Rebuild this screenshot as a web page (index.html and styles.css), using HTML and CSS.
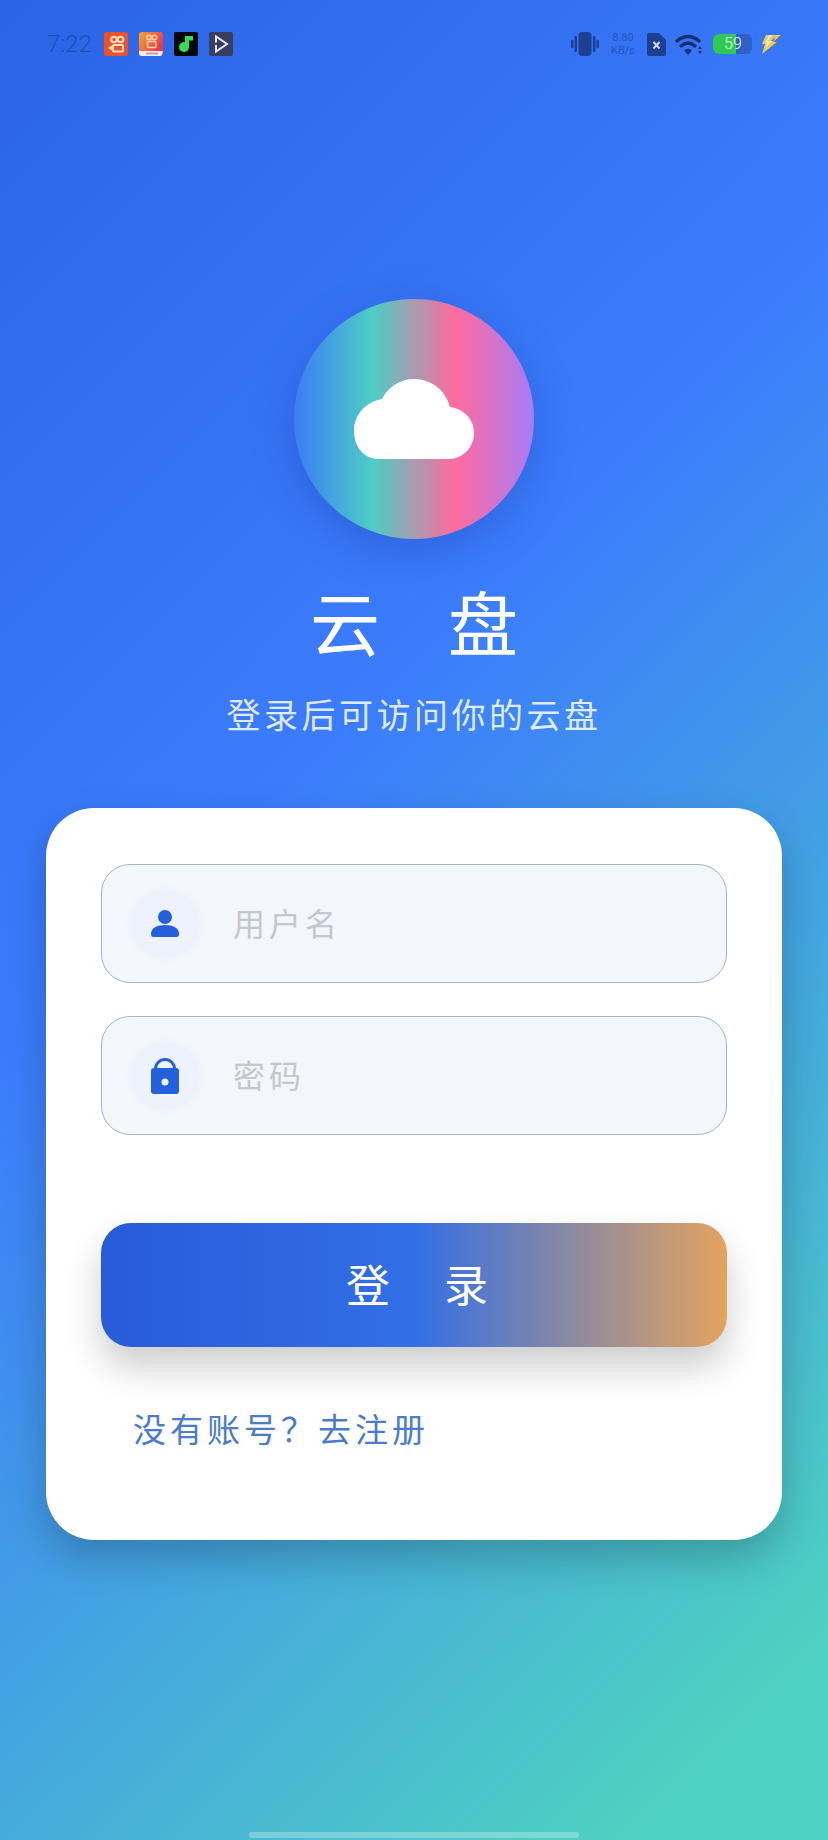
FILE: index.html
```html
<!DOCTYPE html>
<html lang="zh-CN">
<head>
    <meta charset="UTF-8">
    <meta name="viewport" content="width=device-width, initial-scale=1.0">
    <title>云盘</title>
    <link rel="stylesheet" href="styles.css">
</head>
<body>
    <div class="page">
        <!-- Status bar -->
        <div class="status-bar">
            <div class="status-left">
                <span class="time">7:22</span>
                <svg class="app-icon" viewBox="0 0 24 24">
                    <rect width="24" height="24" rx="3" fill="#ee5128"/>
                    <g fill="none" stroke="#fbe3c8" stroke-width="2">
                        <circle cx="10" cy="7.500" r="2.800"/>
                        <circle cx="16.500" cy="7.500" r="2.800"/>
                        <rect x="9" y="13" width="10" height="6.500" rx="1.500"/>
                    </g>
                    <path d="M8 13.500v5l-4-2.500z" fill="#fbe3c8"/>
                </svg>
                <svg class="app-icon" viewBox="0 0 24 24">
                    <defs>
                        <linearGradient id="kwaiGrad" x1="0" y1="0" x2="1" y2="0.6">
                            <stop offset="0" stop-color="#f7a72e"/>
                            <stop offset="1" stop-color="#ee2f4e"/>
                        </linearGradient>
                    </defs>
                    <rect width="24" height="24" rx="3" fill="url(#kwaiGrad)"/>
                    <g fill="none" stroke="#fbd9b0" stroke-width="1.500">
                        <circle cx="10" cy="5.500" r="2.200"/>
                        <circle cx="15.500" cy="5.500" r="2.200"/>
                        <rect x="8.500" y="9.500" width="8.500" height="6" rx="1.200"/>
                    </g>
                    <path d="M0 19h24l-1 3.500q-.5 1.500-2 1.500H3q-3 0-3-3z" fill="#f4ecea"/>
                    <rect x="7" y="20.500" width="12" height="2" fill="#b9a4b5"/>
                </svg>
                <svg class="app-icon" viewBox="0 0 24 24">
                    <rect width="24" height="24" rx="2" fill="#05070c"/>
                    <path d="M11 4h8v4.500h-4V15a5 5 0 1 1-4-4.800z" fill="#35dc5c"/>
                </svg>
                <svg class="app-icon" viewBox="0 0 24 24">
                    <rect width="24" height="24" rx="2" fill="#363f5f"/>
                    <path d="M7 4.500v15l11-7.500z" fill="none" stroke="#e8e2ee" stroke-width="2"/>
                    <path d="M6 12l6-1" stroke="#363f5f" stroke-width="2.500"/>
                </svg>
            </div>
            <div class="status-right">
                <svg class="vibrate" viewBox="0 0 28 24">
                    <rect x="7.500" y="0" width="13" height="24" rx="4" fill="#1d3f8e"/>
                    <rect x="3.500" y="4" width="2.500" height="16" rx="1" fill="#1d3f8e"/>
                    <rect x="22" y="4" width="2.500" height="16" rx="1" fill="#1d3f8e"/>
                    <rect x="0" y="8" width="2.500" height="8" rx="1" fill="#1d3f8e"/>
                    <rect x="25.500" y="8" width="2.500" height="8" rx="1" fill="#1d3f8e"/>
                </svg>
                <div class="speed">
                    <span>8.80</span>
                    <span>KB/s</span>
                </div>
                <svg class="sim" viewBox="0 0 19 23">
                    <path d="M2 0h10l7 7v14a2 2 0 0 1-2 2H2a2 2 0 0 1-2-2V2a2 2 0 0 1 2-2z" fill="#1d3f8e"/>
                    <path d="M6.500 9l6 6.500M12.500 9l-6 6.500" stroke="#c9d6f2" stroke-width="2"/>
                </svg>
                <svg class="wifi" viewBox="0 0 28 21">
                    <g fill="none" stroke="#14306f" stroke-width="3.400" stroke-linecap="round">
                        <path d="M2 7q11-9 22 0"/>
                        <path d="M6 12q7-6 14 0"/>
                    </g>
                    <path d="M9 16.500q4-3.500 8 0l-4 4.500z" fill="#14306f"/>
                    <path d="M25 12l2 3h-4zM25 20l-2-3h4z" fill="#14306f"/>
                </svg>
                <div class="battery">
                    <div class="battery-fill"></div>
                    <span class="battery-num">59</span>
                </div>
                <svg class="bolt" viewBox="0 0 21 20">
                    <path d="M6 1h15l-8 7h4L2 20l3-10H2z" fill="#f2c83c"/>
                    <path d="M9 1h4L8 7h4l-7 8 2-6H5z" fill="#dfe5ee"/>
                    <path d="M15 3l-4 4h3z" fill="#6d7fa8"/>
                </svg>
            </div>
        </div>

        <!-- Logo and title -->
        <div class="hero">
            <div class="logo">
                <svg class="cloud" viewBox="0 0 120 80">
                    <path d="M25 80C10 80 0 68 0 52C0 35 12 23 28 20C34 8 46 0 60 0C78 0 92 12 96 28C110 30 120 40 120 54C120 69 108 80 95 80Z" fill="#fff"/>
                </svg>
            </div>
            <h1 class="title">云盘</h1>
            <p class="subtitle">登录后可访问你的云盘</p>
        </div>

        <!-- Login card -->
        <div class="card">
            <div class="field">
                <div class="field-icon">
                    <svg viewBox="0 0 28 27" width="28" height="27">
                        <circle cx="14" cy="7" r="7" fill="#2360dc"/>
                        <path d="M0 24C0 18 6 15 14 15S28 18 28 24q0 3-2.500 3H2.500Q0 27 0 24z" fill="#2360dc"/>
                    </svg>
                </div>
                <span class="placeholder">用户名</span>
            </div>
            <div class="field">
                <div class="field-icon">
                    <svg viewBox="0 0 28 36" width="28" height="36">
                        <path d="M4.500 13V11a9.500 9.500 0 0 1 19 0V13" fill="none" stroke="#2360dc" stroke-width="3"/>
                        <rect x="0" y="10" width="28" height="26" rx="3" fill="#2360dc"/>
                        <circle cx="14" cy="24" r="3.500" fill="#eef2fb"/>
                    </svg>
                </div>
                <span class="placeholder">密码</span>
            </div>
            <button class="login-btn"><span class="login-text">登录</span></button>
            <a class="register-link">没有账号？去注册</a>
        </div>

        <div class="home-bar"></div>
    </div>
</body>
</html>
```

FILE: styles.css
```css
body {
    margin: 0;
    font-family: "Noto Sans CJK SC", "Noto Sans", sans-serif;
}

.page {
    display: flex;
    flex-direction: column;
    width: 828px;
    height: 1840px;
    overflow: hidden;
    background: linear-gradient(135deg, #2b64e6 0%, #3b7cfd 40%, #4ed2c0 93%);
}

.status-bar {
    display: flex;
    justify-content: space-between;
    align-items: center;
    height: 24px;
    padding: 32px 47px 0 47px;
}

.status-left,
.status-right {
    display: flex;
    align-items: center;
}

.time {
    font-family: Roboto, sans-serif;
    font-size: 24px;
    font-weight: 300;
    color: #1f4fb4;
    margin-right: 12px;
}

.app-icon {
    width: 24px;
    height: 24px;
    margin-right: 11px;
}

.vibrate {
    width: 28px;
    height: 24px;
}

.speed {
    display: flex;
    flex-direction: column;
    align-items: center;
    width: 26px;
    margin-left: 11px;
    font-family: Roboto, sans-serif;
    font-size: 11px;
    line-height: 13px;
    color: #2556bd;
}

.sim {
    width: 19px;
    height: 23px;
    margin-left: 11px;
}

.wifi {
    width: 28px;
    height: 21px;
    margin-left: 9px;
}

.battery {
    position: relative;
    width: 39px;
    height: 20px;
    margin-left: 10px;
    border-radius: 6px;
    background: #2f5fc9;
    overflow: hidden;
}

.battery-fill {
    width: 23px;
    height: 20px;
    background: #2ecb52;
}

.battery-num {
    position: absolute;
    left: 11px;
    top: 0;
    font-family: Roboto, sans-serif;
    font-size: 16px;
    font-weight: 300;
    line-height: 20px;
    color: #f2f7ee;
}

.bolt {
    width: 21px;
    height: 20px;
    margin-left: 8px;
}

.hero {
    display: flex;
    flex-direction: column;
    align-items: center;
    padding-top: 243px;
    color: #fff;
}

.logo {
    display: flex;
    justify-content: center;
    align-items: center;
    width: 240px;
    height: 240px;
    border-radius: 50%;
    background: linear-gradient(90deg, #3b7cf6 0%, #4ecdc4 33%, #ff6b9d 67%, #a67cf8 100%);
    box-shadow: 0 12px 40px rgba(30, 60, 160, 0.35);
}

.cloud {
    width: 120px;
    height: 80px;
}

.title {
    margin: 36px 0 0 0;
    font-size: 70px;
    line-height: 92px;
    font-weight: 400;
    letter-spacing: 68px;
    padding-left: 68px;
}

.subtitle {
    margin: 24px 0 0 0;
    font-size: 34px;
    line-height: 46px;
    letter-spacing: 3.500px;
    color: rgba(255, 255, 255, 0.85);
}

.card {
    display: flex;
    flex-direction: column;
    margin: 71px 46px 0 46px;
    padding: 56px 55px 0 55px;
    height: 676px;
    border-radius: 48px;
    background: #fff;
    box-shadow: 0 18px 40px rgba(0, 0, 0, 0.22);
}

.field {
    display: flex;
    align-items: center;
    box-sizing: border-box;
    height: 119px;
    margin-bottom: 33px;
    padding-left: 28px;
    border: 1px solid #a5b5ca;
    border-radius: 29px;
    background: #f3f6fb;
}

.field-icon {
    display: flex;
    justify-content: center;
    align-items: center;
    width: 70px;
    height: 70px;
    border-radius: 50%;
    background: #eef2fc;
    box-shadow: 0 0 6px #eef2fc;
}

.placeholder {
    margin: 0 0 4px 33px;
    font-size: 32px;
    font-weight: 400;
    letter-spacing: 4px;
    color: #c3c7cf;
}

.login-btn {
    height: 124px;
    margin-top: 55px;
    padding: 0 0 5px 60px;
    border: none;
    border-radius: 30px;
    background: linear-gradient(90deg, #285bd8 0%, #326fe6 50%, #e4a35e 100%);
    box-shadow: 0 20px 36px rgba(0, 0, 0, 0.2);
    font-family: inherit;
    font-size: 44px;
    letter-spacing: 54px;
    color: #fff;
}

.register-link {
    margin: 58px 0 0 32px;
    font-size: 33px;
    line-height: 46px;
    letter-spacing: 4px;
    color: #4a7ccb;
}

.home-bar {
    width: 330px;
    height: 6px;
    margin: auto auto 2px auto;
    border-radius: 3px;
    background: rgba(255, 255, 255, 0.28);
}
```
